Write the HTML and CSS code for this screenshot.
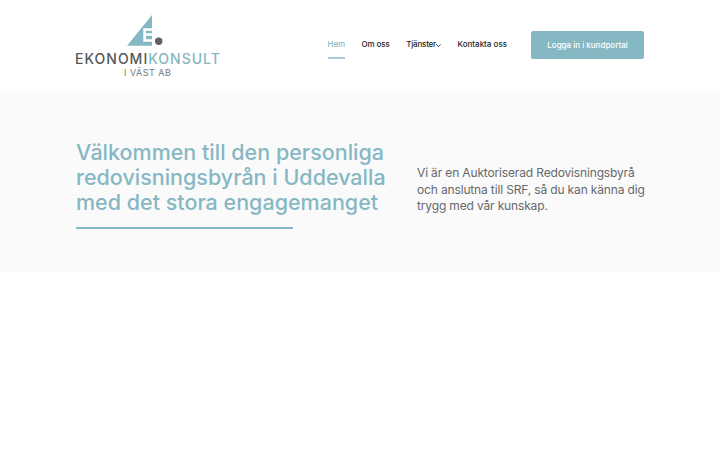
FILE: index.html
```html
<!DOCTYPE html>
<html lang="sv">
<head>
<meta charset="utf-8">
<title>Ekonomikonsult i Väst AB</title>
<link rel="stylesheet" href="styles.css">
</head>
<body>
<header class="site-header">
  <a class="logo" href="#">
    <svg class="logo-mark" width="36" height="31" viewBox="0 0 36 31" aria-hidden="true">
      <path class="mark-blue" d="M0 30.700 L25 0 L25 30.700 Z"/>
      <path class="mark-cut" d="M16.300 13.300 H25 V15.700 H19 V18.300 H25 V20.700 H19 V24.300 H25 V26.700 H16.300 Z"/>
      <circle class="mark-dot" cx="31.700" cy="26.300" r="3.700"/>
    </svg>
    <span class="logo-name"><span class="logo-dark">EKONOMI</span><span class="logo-blue">KONSULT</span></span>
    <span class="logo-sub">I VÄST AB</span>
  </a>
  <nav class="nav">
    <a class="nav-link active" href="#">Hem</a>
    <a class="nav-link" href="#">Om oss</a>
    <a class="nav-link dropdown" href="#">Tjänster<svg class="chev" width="5" height="3" viewBox="0 0 5 3"><path d="M.3 .4 L2.500 2.500 L4.700 .4" fill="none" stroke="currentColor" stroke-width=".8"/></svg></a>
    <a class="nav-link" href="#">Kontakta oss</a>
    <a class="cta" href="#">Logga in i kundportal</a>
  </nav>
</header>
<section class="hero">
  <div class="hero-left">
    <h1>Välkommen till den personliga redovisningsbyrån i Uddevalla med det stora engagemanget</h1>
    <div class="rule"></div>
  </div>
  <p class="hero-text">Vi är en Auktoriserad Redovisningsbyrå och anslutna till SRF, så du kan känna dig trygg med vår kunskap.</p>
</section>
</body>
</html>
```
FILE: styles.css
```css
* { box-sizing: border-box; }
html, body { margin: 0; background: #fff; }
body { font-family: "Inter", "Open Sans", sans-serif; height: 450px; overflow: hidden; }
a { text-decoration: none; color: inherit; }

.site-header {
  height: 91px;
  padding: 15px 76px 0 75px;
  display: flex;
  justify-content: space-between;
  align-items: flex-start;
}
.logo { display: flex; flex-direction: column; align-items: flex-start; width: 146px; }
.logo-mark { display: block; margin-left: 52px; }
.logo-name { font-size: 14px; line-height: 17px; letter-spacing: 1px; white-space: nowrap; margin-top: 4px; font-weight: 500; }
.logo-dark { color: #55585b; }
.logo-blue { color: #86b6c2; }
.logo-sub { font-size: 9px; line-height: 9px; letter-spacing: .5px; color: #76797c; margin: 1px 0 0 49px; white-space: nowrap; }
.mark-blue { fill: #86b8c4; }
.mark-cut { fill: #fff; }
.mark-dot { fill: #5d5f62; }

.nav { display: flex; align-items: flex-start; margin-top: 16px; }
.nav-link {
  font-size: 8px;
  line-height: 11px;
  color: #1d1d1f;
  font-weight: 500;
  margin-right: 16.500px;
  padding: 8px 0 7px;
  border-bottom: 2px solid transparent;
  display: flex;
  align-items: center;
  white-space: nowrap;
}
.nav-link.active { color: #86b8c4; border-bottom-color: #a9cdd6; letter-spacing: -.1px; }
.nav-link.dropdown { letter-spacing: -.2px; }
.nav-link:nth-child(2) { letter-spacing: -.1px; }
.nav-link:nth-child(4) { margin-right: 24px; }
.chev { margin-left: 0; margin-top: 1px; }
.cta {
  width: 113px; height: 28px;
  background: #86b8c4; color: #fff; border-radius: 2px;
  font-size: 8px; font-weight: 500;
  display: flex; align-items: center; justify-content: center;
}

.hero {
  height: 181px;
  background: #fafafa;
  padding: 49px 75px 0 76px;
  display: flex;
  align-items: flex-start;
}
.hero-left { width: 341px; flex: none; }
h1 {
  margin: 0;
  width: 320px;
  font-size: 21.500px;
  line-height: 25px;
  font-weight: 500;
  color: #86b8c4;
}
.rule { width: 217px; height: 2px; background: #86b8c4; margin-top: 12px; }
.hero-text {
  margin: 25px 0 0;
  font-size: 12px;
  letter-spacing: -.15px;
  line-height: 16.600px;
  color: #66696c;
}
```
